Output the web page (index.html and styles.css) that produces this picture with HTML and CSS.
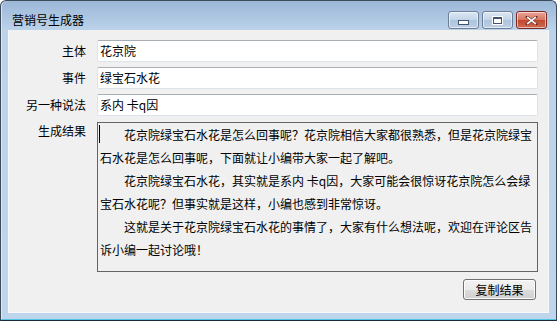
FILE: index.html
```html
<!DOCTYPE html>
<html lang="zh-CN">
  <head>
    <meta charset="UTF-8" />
    <title>营销号生成器</title>
    <link rel="stylesheet" href="styles.css">
  </head>
  <body>
    <div class="window">
      <div class="titlebar">
        <span class="title">营销号生成器</span>
        <div class="controls">
          <span class="ctl ctl-min"><i></i></span>
          <span class="ctl ctl-max"><i></i></span>
          <span class="ctl ctl-close">
            <svg width="13" height="9" viewBox="0 0 13 9">
              <path d="M2 1 L11 8 M11 1 L2 8" stroke="#fff" stroke-width="2.6" stroke-linecap="square" />
              <path d="M2 1 L11 8 M11 1 L2 8" stroke="#f4f4f4" stroke-width="1.6" />
            </svg>
          </span>
        </div>
      </div>
      <div class="client">
        <div class="form">
          <label>主体</label>
          <div class="field">花京院</div>
          <label>事件</label>
          <div class="field">绿宝石水花</div>
          <label>另一种说法</label>
          <div class="field">系内 卡q因</div>
          <label class="top">生成结果</label>
          <div class="result">
            <p><span class="caret"></span>花京院绿宝石水花是怎么回事呢？花京院相信大家都很熟悉，但是花京院绿宝<br>石水花是怎么回事呢，下面就让小编带大家一起了解吧。</p>
            <p>花京院绿宝石水花，其实就是系内 卡q因，大家可能会很惊讶花京院怎么会绿<br>宝石水花呢？但事实就是这样，小编也感到非常惊讶。</p>
            <p>这就是关于花京院绿宝石水花的事情了，大家有什么想法呢，欢迎在评论区告<br>诉小编一起讨论哦！</p>
          </div>
        </div>
        <div class="actions">
          <button>复制结果</button>
        </div>
      </div>
    </div>
  </body>
</html>
```

FILE: styles.css
```css
body {
  margin: 0;
  font-family: "Noto Sans CJK SC", "Liberation Sans", sans-serif;
  font-size: 12px;
  color: #000;
  background: #fff;
}
.window {
  width: 557px;
  height: 321px;
  box-sizing: border-box;
  border: 1px solid #3c4a5a;
  border-bottom-color: #1a2a38;
  border-radius: 6px 6px 0 0;
  background: linear-gradient(#9cb8d8, #bcd3ea 30px, #bfd5ec);
  box-shadow: inset 0 -1px 0 #4fc6e4, inset 1px 0 0 #dce8f4;
  display: flex;
  flex-direction: column;
}
.titlebar {
  height: 29px;
  display: flex;
  align-items: flex-start;
  justify-content: space-between;
}
.title {
  margin: 10px 0 0 11px;
  line-height: 17px;
  color: #000;
}
.controls {
  display: flex;
  gap: 3px;
  margin: 10px 9px 0 0;
}
.ctl {
  width: 29px;
  height: 16px;
  border: 1px solid #6d7f96;
  border-radius: 3px;
  background: linear-gradient(#dbe6f3, #c3d4e8 50%, #aec3dc 51%, #bcd0e6);
  box-shadow: inset 0 0 0 1px rgba(255, 255, 255, 0.55);
  display: flex;
  align-items: center;
  justify-content: center;
}
.ctl-min i {
  width: 9px;
  height: 3px;
  margin-top: 5px;
  background: #fff;
  border: 1px solid #42556c;
}
.ctl-max i {
  width: 7px;
  height: 4px;
  border: 1px solid #42556c;
  border-top-width: 2px;
  background: #fff;
  box-shadow: 0 0 0 1px #fff;
}
.ctl-close {
  border-color: #7a2a22;
  background: linear-gradient(#e9a497, #d67562 50%, #c2472f 51%, #cf6b52);
}
.ctl-close svg path:first-child {
  stroke: #5c1e17;
}
.client {
  flex: 1;
  margin: 0 7px 7px 7px;
  background: #f0f0f0;
  border: 1px solid #f6f8fb;
  border-top: none;
  padding: 10px 11px 0 0;
  box-sizing: border-box;
}
.form {
  display: grid;
  grid-template-columns: 77px 441px;
  column-gap: 11px;
  row-gap: 5px;
  grid-template-rows: 22px 22px 22px 151px;
}
.form label {
  text-align: right;
  line-height: 22px;
}
.form label.top {
  line-height: 17px;
  margin-top: 1px;
}
.field {
  box-sizing: border-box;
  background: #fff;
  border: 1px solid #dde3ea;
  border-top-color: #a9aeb5;
  border-radius: 2px;
  padding-left: 2px;
  line-height: 20px;
}
.result {
  margin-top: 1px;
  border: 1px solid #646464;
  padding: 0 2px;
  line-height: 23px;
  white-space: nowrap;
  position: relative;
}
.result p {
  margin: 0;
  text-indent: 24px;
}
.caret {
  position: absolute;
  left: 1px;
  top: 2px;
  width: 1px;
  height: 18px;
  background: #000;
}
.actions {
  display: flex;
  justify-content: flex-end;
  margin-top: 7px;
  padding-right: 1px;
}
button {
  font-family: inherit;
  font-size: 12px;
  width: 73px;
  height: 21px;
  padding: 0;
  border: 1px solid #707070;
  border-radius: 3px;
  background: linear-gradient(#f2f2f2, #ebebeb 50%, #dddddd 51%, #cfcfcf);
  box-shadow: inset 0 0 0 1px #fcfcfc;
  color: #000;
}
```
